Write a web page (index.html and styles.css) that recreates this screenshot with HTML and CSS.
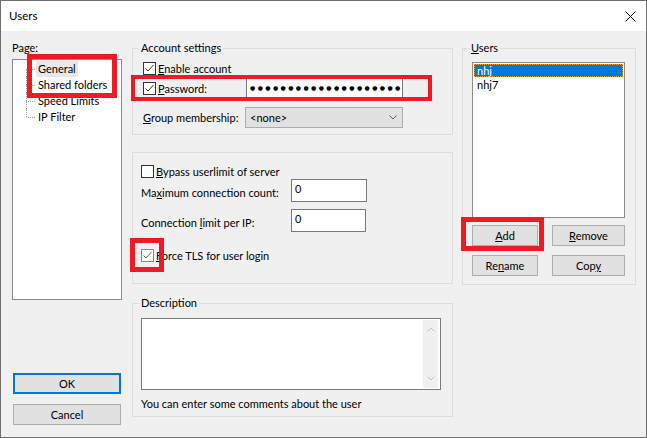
FILE: index.html
```html
<!DOCTYPE html>
<html>
<head>
<meta charset="utf-8">
<title>Users</title>
<link rel="stylesheet" href="styles.css">
</head>
<body>
<div class="window">
  <div class="titlebar">
    <span class="title">Users</span>
    <svg class="close" width="11" height="11" viewBox="0 0 11 11"><path d="M0.5 0.5 L10.5 10.5 M10.5 0.5 L0.5 10.5" stroke="#000" stroke-width="1" fill="none"/></svg>
  </div>
  <div class="body">
    <div class="col-left">
      <div class="page-label">Page:</div>
      <div class="tree">
        <div class="node first"><span class="conn"><span class="c-top"></span><span class="c-bot"></span></span><span class="node-text selected">General</span></div>
        <div class="node"><span class="conn"><span class="c-top"></span><span class="c-bot"></span></span><span class="node-text">Shared folders</span></div>
        <div class="node"><span class="conn"><span class="c-top"></span><span class="c-bot"></span></span><span class="node-text">Speed Limits</span></div>
        <div class="node last"><span class="conn"><span class="c-top"></span><span class="c-bot"></span></span><span class="node-text">IP Filter</span></div>
      </div>
      <button class="btn btn-ok">OK</button>
      <button class="btn btn-cancel">Cancel</button>
    </div>

    <div class="col-mid">
      <fieldset class="group">
        <legend>Account settings</legend>
        <div class="acct">
          <div class="row r1">
            <span class="cb"><svg width="11" height="11" viewBox="0 0 11 11"><polyline points="1.5,5.5 4,8 9.5,2" fill="none" stroke="#333" stroke-width="1"/></svg></span>
            <span><u>E</u>nable account</span>
          </div>
          <div class="row r2">
            <div class="lbl lbl-pw">
              <span class="cb"><svg width="11" height="11" viewBox="0 0 11 11"><polyline points="1.5,5.5 4,8 9.5,2" fill="none" stroke="#333" stroke-width="1"/></svg></span>
              <span><u>P</u>assword:</span>
            </div>
            <div class="pw">●●●●●●●●●●●●●●●●●●●●●●●</div>
          </div>
          <div class="row r3">
            <div class="lbl lbl-grp"><span><u>G</u>roup membership:</span></div>
            <div class="combo">
              <span>&lt;none&gt;</span>
              <svg class="chev" width="8" height="5" viewBox="0 0 8 5"><polyline points="0.5,0.5 4,4 7.5,0.5" fill="none" stroke="#606060" stroke-width="1"/></svg>
            </div>
          </div>
        </div>
      </fieldset>

      <fieldset class="group limits">
        <div class="limits-inner">
          <div class="row r-by">
            <span class="cb"></span>
            <span><u>B</u>ypass userlimit of server</span>
          </div>
          <div class="row r-in">
            <div class="lbl-in">Ma<u>x</u>imum connection count:</div>
            <div class="num num-a">0</div>
          </div>
          <div class="row r-in r-in2">
            <div class="lbl-in">Connection <u>l</u>imit per IP:</div>
            <div class="num num-b">0</div>
          </div>
          <div class="row r-tls">
            <span class="cb dim"><svg width="11" height="11" viewBox="0 0 11 11"><polyline points="1.5,5.5 4,8 9.5,2" fill="none" stroke="#666" stroke-width="1"/></svg></span>
            <span><u>F</u>orce TLS for user login</span>
          </div>
        </div>
      </fieldset>

      <fieldset class="group desc">
        <legend>Description</legend>
        <div class="desc-inner">
          <div class="textbox">
            <div class="vscroll">
              <svg width="8" height="5" viewBox="0 0 8 5"><polyline points="0.5,4.5 4,1 7.5,4.5" fill="none" stroke="#c2c2c2" stroke-width="1"/></svg>
              <svg width="8" height="5" viewBox="0 0 8 5"><polyline points="0.5,0.5 4,4 7.5,0.5" fill="none" stroke="#c2c2c2" stroke-width="1"/></svg>
            </div>
          </div>
          <div class="hint">You can enter some comments about the user</div>
        </div>
      </fieldset>
    </div>

    <div class="col-right">
      <fieldset class="group">
        <legend><u>U</u>sers</legend>
        <div class="users-inner">
          <div class="listbox">
            <div class="li sel">nhj</div>
            <div class="li">nhj7</div>
          </div>
          <div class="btn-grid">
            <button class="btn"><u>A</u>dd</button>
            <button class="btn"><u>R</u>emove</button>
            <button class="btn">Re<u>n</u>ame</button>
            <button class="btn">Cop<u>y</u></button>
          </div>
        </div>
      </fieldset>
    </div>
  </div>

  <div class="anno anno-pages"></div>
  <div class="anno anno-pw"></div>
  <div class="anno anno-tls"></div>
  <div class="anno anno-add"></div>
</div>
</body>
</html>
```

FILE: styles.css
```css
html, body {
  margin: 0;
  padding: 0;
}
body {
  width: 647px;
  height: 438px;
  overflow: hidden;
  background: #f0f0f0;
}
.window {
  position: relative;
  width: 647px;
  height: 438px;
  box-sizing: border-box;
  border: 1px solid #6e6e6e;
  background: #f0f0f0;
  font-family: Lato, "Noto Sans", sans-serif;
  font-size: 11px;
  color: #000;
  display: flex;
  flex-direction: column;
}
.titlebar {
  flex: none;
  height: 30px;
  background: #fff;
  display: flex;
  align-items: center;
  padding: 0 10px 0 8px;
}
.title {
  line-height: 16px;
  font-size: 11.5px;
}
.close {
  margin-left: auto;
  display: block;
}
.body {
  flex: 1;
  display: flex;
  padding: 9px 10px 0 11px;
}

/* left column */
.col-left {
  flex: none;
  width: 110px;
  display: flex;
  flex-direction: column;
}
.page-label {
  height: 16px;
  line-height: 16px;
  margin-bottom: 3px;
}
.tree {
  height: 241px;
  box-sizing: border-box;
  border: 1px solid #8c8c8c;
  background: #fff;
  padding-top: 1px;
}
.node {
  display: flex;
  height: 16px;
  line-height: 16px;
  padding-left: 13px;
}
.conn {
  flex: none;
  width: 9px;
  display: flex;
  flex-direction: column;
}
.c-top, .c-bot {
  height: 8px;
  box-sizing: border-box;
  border-left: 1px dotted #a0a0a0;
}
.c-bot {
  border-top: 1px dotted #a0a0a0;
}
.node.first .c-top {
  border-left-color: transparent;
}
.node.last .c-bot {
  border-left-color: transparent;
}
.node-text {
  margin-left: 1px;
  padding: 0 2px;
  white-space: nowrap;
}
.node-text.selected {
  background: #e8e8e8;
}

.btn {
  box-sizing: border-box;
  font: inherit;
  color: #000;
  background: #e1e1e1;
  border: 1px solid #adadad;
  padding: 0;
  margin: 0;
  text-align: center;
  line-height: 17px;
}
.btn-ok {
  margin-top: 73px;
  margin-left: 1px;
  width: 108px;
  height: 21px;
  border: 2px solid #0078d7;
}
.btn-cancel {
  margin-top: 10px;
  margin-left: 1px;
  width: 108px;
  height: 21px;
}

/* group boxes */
.group {
  margin: 0;
  padding: 0;
  min-width: 0;
  border: 1px solid #dcdcdc;
}
.group legend {
  margin-left: 6px;
  padding: 0 2px;
  height: 16px;
  line-height: 16px;
}

.col-mid {
  flex: none;
  width: 321px;
  margin-left: 10px;
  display: flex;
  flex-direction: column;
}
.row {
  display: flex;
  align-items: center;
  white-space: nowrap;
}
.cb {
  flex: none;
  width: 13px;
  height: 13px;
  box-sizing: border-box;
  border: 1px solid #333;
  background: #fff;
  margin-right: 2px;
}
.cb svg {
  display: block;
}
.cb.dim {
  border-color: #8a8a8a;
}

.acct {
  padding: 5px 0 6px 10px;
}
.r1 {
  height: 15px;
}
.r2 {
  height: 20px;
  margin-top: 2px;
}
.r3 {
  height: 21px;
  margin-top: 9px;
}
.lbl {
  display: flex;
  align-items: center;
  flex: none;
}
.lbl-pw {
  width: 103px;
}
.lbl-grp {
  width: 102px;
}
.pw {
  width: 157px;
  height: 20px;
  box-sizing: border-box;
  background: #fff;
  border: 1px solid #7a7a7a;
  overflow: hidden;
  white-space: nowrap;
  font-family: "DejaVu Sans", sans-serif;
  font-size: 6px;
  letter-spacing: 2.4px;
  line-height: 18px;
  padding-left: 3px;
}
.combo {
  width: 158px;
  height: 21px;
  box-sizing: border-box;
  background: #e1e1e1;
  border: 1px solid #adadad;
  display: flex;
  align-items: center;
  padding: 0 5px 0 4px;
}
.chev {
  margin-left: auto;
  display: block;
}

.limits {
  margin-top: 17px;
}
.limits-inner {
  padding: 11px 0 20px 8px;
}
.r-by {
  height: 15px;
}
.r-in {
  height: 23px;
  align-items: flex-start;
}
.r-in2 {
  margin-top: 7px;
}
.lbl-in {
  width: 150px;
  flex: none;
  padding-top: 6px;
  line-height: 15px;
}
.num {
  height: 23px;
  box-sizing: border-box;
  border: 1px solid #7a7a7a;
  background: #fff;
  padding: 1px 0 0 3px;
  line-height: 15px;
}
.num-a {
  width: 76px;
}
.num-b {
  width: 75px;
}
.r-tls {
  height: 15px;
  margin-top: 16px;
}

.desc {
  margin-top: 11px;
}
.desc-inner {
  padding: 7px 0 5px 8px;
}
.textbox {
  width: 300px;
  height: 72px;
  box-sizing: border-box;
  border: 1px solid #7a7a7a;
  background: #fff;
  display: flex;
  justify-content: flex-end;
}
.vscroll {
  width: 15px;
  margin: 1px 2px 1px 0;
  padding: 7px 0;
  box-sizing: border-box;
  background: #f0f0f0;
  display: flex;
  flex-direction: column;
  justify-content: space-between;
  align-items: center;
}
.vscroll svg {
  display: block;
}
.hint {
  margin-top: 6px;
  line-height: 15px;
}

/* right column */
.col-right {
  flex: none;
  width: 174px;
  margin-left: 9px;
  align-self: flex-start;
}
.users-inner {
  padding: 6px 0 8px 9px;
}
.listbox {
  width: 153px;
  height: 156px;
  box-sizing: border-box;
  border: 1px solid #8c8c8c;
  background: #fff;
  padding: 1px;
}
.li {
  height: 13px;
  line-height: 13px;
  padding-left: 3px;
}
.li + .li {
  margin-top: 1px;
}
.li.sel {
  background: #0078d7;
  color: #fff;
  outline: 1px dotted #e8a33c;
  outline-offset: -1px;
}
.btn-grid {
  margin-top: 7px;
  display: grid;
  grid-template-columns: 66px 73px;
  column-gap: 14px;
  row-gap: 9px;
}
.btn-grid .btn {
  height: 21px;
}

/* red annotation rectangles drawn over the dialog */
.anno {
  position: absolute;
  box-sizing: border-box;
  border: 5px solid #ed1c24;
}
.anno-pages {
  left: 26px;
  top: 53px;
  width: 90px;
  height: 44px;
}
.anno-pw {
  left: 130px;
  top: 74px;
  width: 301px;
  height: 26px;
  border-width: 4px;
}
.anno-tls {
  left: 129px;
  top: 237px;
  width: 34px;
  height: 34px;
}
.anno-add {
  left: 460px;
  top: 216px;
  width: 83px;
  height: 34px;
}
```
